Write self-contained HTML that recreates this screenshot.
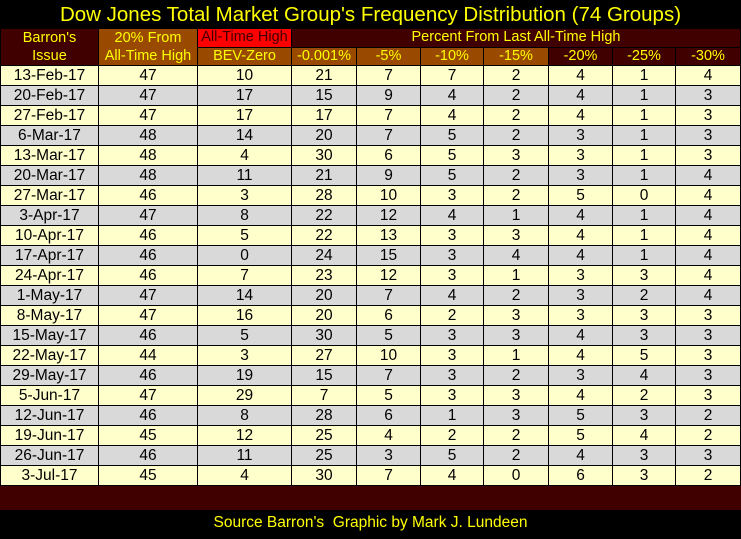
<!DOCTYPE html><html><head><style>
body{margin:0;background:#000;width:741px;height:539px;overflow:hidden;font-family:"Liberation Sans",Arial,sans-serif}
.t{position:absolute;left:0;top:0;width:741px;height:28px;color:#ffff00;font-size:20.5px;text-align:center;line-height:30px}
table{position:absolute;left:0;top:28px;border-collapse:collapse;table-layout:fixed}
td{padding:0;text-align:center;font-size:15px;border:1px solid #000;white-space:nowrap;overflow:hidden}
.h td{color:#ffff00;height:17px;line-height:17px;font-size:14.5px}
.m{background:#400000}.b{background:#9a4a00}.r{background:#ff0000;color:#400000!important}
.d td{height:19px;line-height:19px;color:#000;font-size:15.5px}
.y td{background:#ffffcc}.g td{background:#d9d9d9}
.band{position:absolute;left:0;top:486px;width:741px;height:24px;background:#400000}
.f{position:absolute;left:0;top:514px;width:741px;text-align:center;color:#ffff00;font-size:15.5px}
</style></head><body>
<div class="t">Dow Jones Total Market Group's Frequency Distribution (74 Groups)</div>
<div class="band"></div>
<table>
<colgroup><col style="width:98px"><col style="width:99px"><col style="width:94px"><col style="width:65px"><col style="width:64px"><col style="width:63px"><col style="width:65px"><col style="width:64px"><col style="width:63px"><col style="width:65px"></colgroup>
<tr class="h"><td class="m" rowspan="2" style="line-height:18px">Barron's<br>Issue</td><td class="b" rowspan="2" style="line-height:18px">20% From<br>All-Time High</td><td class="r">All-Time High</td><td class="m" colspan="7">Percent From Last All-Time High</td></tr>
<tr class="h"><td class="b">BEV-Zero</td><td class="b">-0.001%</td><td class="b">-5%</td><td class="b">-10%</td><td class="b">-15%</td><td class="m">-20%</td><td class="m">-25%</td><td class="m">-30%</td></tr>
<tr class="d y"><td>13-Feb-17</td><td>47</td><td>10</td><td>21</td><td>7</td><td>7</td><td>2</td><td>4</td><td>1</td><td>4</td></tr>
<tr class="d g"><td>20-Feb-17</td><td>47</td><td>17</td><td>15</td><td>9</td><td>4</td><td>2</td><td>4</td><td>1</td><td>3</td></tr>
<tr class="d y"><td>27-Feb-17</td><td>47</td><td>17</td><td>17</td><td>7</td><td>4</td><td>2</td><td>4</td><td>1</td><td>3</td></tr>
<tr class="d g"><td>6-Mar-17</td><td>48</td><td>14</td><td>20</td><td>7</td><td>5</td><td>2</td><td>3</td><td>1</td><td>3</td></tr>
<tr class="d y"><td>13-Mar-17</td><td>48</td><td>4</td><td>30</td><td>6</td><td>5</td><td>3</td><td>3</td><td>1</td><td>3</td></tr>
<tr class="d g"><td>20-Mar-17</td><td>48</td><td>11</td><td>21</td><td>9</td><td>5</td><td>2</td><td>3</td><td>1</td><td>4</td></tr>
<tr class="d y"><td>27-Mar-17</td><td>46</td><td>3</td><td>28</td><td>10</td><td>3</td><td>2</td><td>5</td><td>0</td><td>4</td></tr>
<tr class="d g"><td>3-Apr-17</td><td>47</td><td>8</td><td>22</td><td>12</td><td>4</td><td>1</td><td>4</td><td>1</td><td>4</td></tr>
<tr class="d y"><td>10-Apr-17</td><td>46</td><td>5</td><td>22</td><td>13</td><td>3</td><td>3</td><td>4</td><td>1</td><td>4</td></tr>
<tr class="d g"><td>17-Apr-17</td><td>46</td><td>0</td><td>24</td><td>15</td><td>3</td><td>4</td><td>4</td><td>1</td><td>4</td></tr>
<tr class="d y"><td>24-Apr-17</td><td>46</td><td>7</td><td>23</td><td>12</td><td>3</td><td>1</td><td>3</td><td>3</td><td>4</td></tr>
<tr class="d g"><td>1-May-17</td><td>47</td><td>14</td><td>20</td><td>7</td><td>4</td><td>2</td><td>3</td><td>2</td><td>4</td></tr>
<tr class="d y"><td>8-May-17</td><td>47</td><td>16</td><td>20</td><td>6</td><td>2</td><td>3</td><td>3</td><td>3</td><td>3</td></tr>
<tr class="d g"><td>15-May-17</td><td>46</td><td>5</td><td>30</td><td>5</td><td>3</td><td>3</td><td>4</td><td>3</td><td>3</td></tr>
<tr class="d y"><td>22-May-17</td><td>44</td><td>3</td><td>27</td><td>10</td><td>3</td><td>1</td><td>4</td><td>5</td><td>3</td></tr>
<tr class="d g"><td>29-May-17</td><td>46</td><td>19</td><td>15</td><td>7</td><td>3</td><td>2</td><td>3</td><td>4</td><td>3</td></tr>
<tr class="d y"><td>5-Jun-17</td><td>47</td><td>29</td><td>7</td><td>5</td><td>3</td><td>3</td><td>4</td><td>2</td><td>3</td></tr>
<tr class="d g"><td>12-Jun-17</td><td>46</td><td>8</td><td>28</td><td>6</td><td>1</td><td>3</td><td>5</td><td>3</td><td>2</td></tr>
<tr class="d y"><td>19-Jun-17</td><td>45</td><td>12</td><td>25</td><td>4</td><td>2</td><td>2</td><td>5</td><td>4</td><td>2</td></tr>
<tr class="d g"><td>26-Jun-17</td><td>46</td><td>11</td><td>25</td><td>3</td><td>5</td><td>2</td><td>4</td><td>3</td><td>3</td></tr>
<tr class="d y"><td>3-Jul-17</td><td>45</td><td>4</td><td>30</td><td>7</td><td>4</td><td>0</td><td>6</td><td>3</td><td>2</td></tr>
</table>
<div class="f">Source Barron's&nbsp; Graphic by Mark J. Lundeen</div>
</body></html>
